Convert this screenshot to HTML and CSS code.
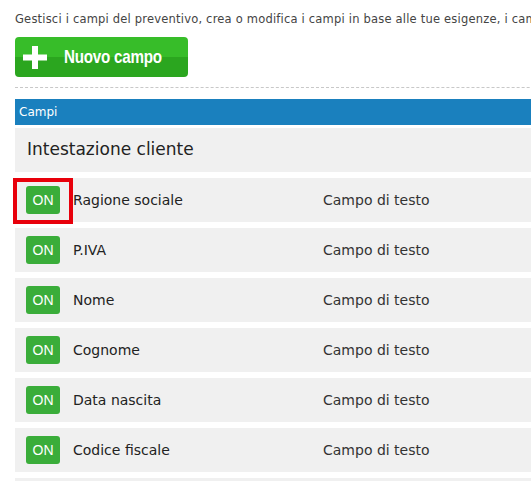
FILE: index.html
```html
<!DOCTYPE html>
<html lang="it">
<head>
    <meta charset="UTF-8">
    <meta name="viewport" content="width=device-width, initial-scale=1.0">
    <title>Campi preventivo</title>
    <link rel="stylesheet" href="styles.css">
</head>
<body>
<div class="page">
    <p class="intro">Gestisci i campi del preventivo, crea o modifica i campi in base alle tue esigenze, i campi contrassegnati</p>

    <button class="newField">
        <svg class="plus" width="24" height="23" viewBox="0 0 24 23">
            <rect x="9" y="0" width="6" height="23" fill="#fff"/>
            <rect x="0" y="8.5" width="24" height="6" fill="#fff"/>
        </svg>
        <span>Nuovo campo</span>
    </button>

    <div class="divider"></div>

    <div class="fields">
        <div class="fieldsHead">Campi</div>
        <div class="group">Intestazione cliente</div>

        <div class="fieldRow">
            <span class="toggle">ON</span>
            <span class="fieldName">Ragione sociale</span>
            <span class="fieldType">Campo di testo</span>
            <!-- highlight box -->
            <div class="highlight"></div>
        </div>
        <div class="fieldRow">
            <span class="toggle">ON</span>
            <span class="fieldName">P.IVA</span>
            <span class="fieldType">Campo di testo</span>
        </div>
        <div class="fieldRow">
            <span class="toggle">ON</span>
            <span class="fieldName">Nome</span>
            <span class="fieldType">Campo di testo</span>
        </div>
        <div class="fieldRow">
            <span class="toggle">ON</span>
            <span class="fieldName">Cognome</span>
            <span class="fieldType">Campo di testo</span>
        </div>
        <div class="fieldRow">
            <span class="toggle">ON</span>
            <span class="fieldName">Data nascita</span>
            <span class="fieldType">Campo di testo</span>
        </div>
        <div class="fieldRow">
            <span class="toggle">ON</span>
            <span class="fieldName">Codice fiscale</span>
            <span class="fieldType">Campo di testo</span>
        </div>
        <div class="fieldRow">
            <span class="toggle">ON</span>
            <span class="fieldName">Indirizzo</span>
            <span class="fieldType">Campo di testo</span>
        </div>
    </div>
</div>
</body>
</html>
```

FILE: styles.css
```css
 body {
     margin: 0;
     overflow: hidden;
     background-color: #fff;
     color: #333;
     font-family: "DejaVu Sans", sans-serif;
 }

 .page {
     padding-left: 15px;
     width: 620px;
 }

 .intro {
     margin: 11px 0 0 0;
     font-size: 11.5px;
     letter-spacing: 0.2px;
     line-height: 16px;
     white-space: nowrap;
     color: #444;
 }

 .newField {
     display: flex;
     align-items: center;
     margin-top: 10px;
     width: 173px;
     height: 40px;
     padding: 0 0 0 8px;
     border: none;
     border-radius: 4px;
     background: linear-gradient(to bottom, #37bd29 0%, #37bd29 50%, #2ba61f 50%, #2ba61f 100%);
     color: #fff;
     cursor: pointer;
 }

 .newField span {
     display: inline-block;
     margin-left: 17px;
     font-family: "Liberation Sans", Arial, sans-serif;
     font-weight: bold;
     font-size: 19px;
     letter-spacing: -0.3px;
     transform: scaleX(0.8);
     transform-origin: left center;
 }

 .divider {
     margin-top: 10px;
     border-top: 1px dashed #c8c8c8;
 }

 .fields {
     margin-top: 11px;
 }

 .fieldsHead {
     height: 26px;
     line-height: 26px;
     padding-left: 4px;
     background-color: #1a80be;
     color: #fff;
     font-size: 12px;
 }

 .group {
     margin-top: 3px;
     height: 44px;
     line-height: 43px;
     padding-left: 12px;
     background-color: #f0f0f0;
     font-size: 17px;
     color: #222;
 }

 .fieldRow {
     position: relative;
     display: flex;
     align-items: center;
     margin-top: 6px;
     height: 44px;
     padding-left: 11px;
     background-color: #f0f0f0;
     font-size: 14px;
 }

 .toggle {
     width: 34px;
     height: 28px;
     line-height: 28px;
     text-align: center;
     border-radius: 3px;
     background-color: #3aad3a;
     color: #fff;
     font-family: "Liberation Sans", Arial, sans-serif;
     font-size: 14px;
 }

 .fieldName {
     width: 250px;
     margin-left: 13px;
     color: #222;
 }

 .fieldType {
     color: #333;
 }

 .highlight {
     position: absolute;
     left: -2px;
     top: 0;
     width: 52px;
     height: 38px;
     border: 4px solid #e8000b;
 }
```
